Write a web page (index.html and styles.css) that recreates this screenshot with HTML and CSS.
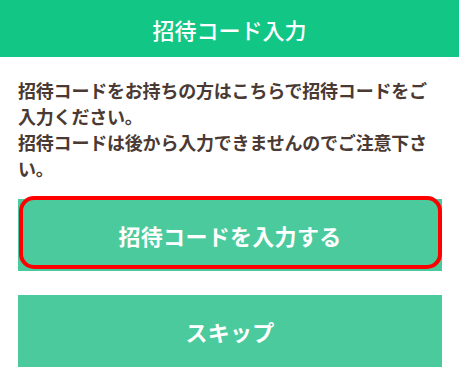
FILE: index.html
```html
<!DOCTYPE html>
<html lang="ja">
<head>
<meta charset="utf-8">
<link rel="stylesheet" href="styles.css">
</head>
<body>
<header class="top-bar">
  <h1 class="top-title">招待コード入力</h1>
</header>
<main class="content">
  <p class="notice">招待コードをお持ちの方はこちらで招待コードをご入力ください。<br>招待コードは後から入力できませんのでご注意下さい。</p>
  <div class="actions">
    <div class="btn-wrap">
      <button class="btn">招待コードを入力する</button>
      <span class="highlight"></span>
    </div>
    <button class="btn">スキップ</button>
  </div>
</main>
</body>
</html>
```

FILE: styles.css
```css
* { box-sizing: border-box; }
html, body {
  margin: 0;
  padding: 0;
  background: #ffffff;
  font-family: "Noto Sans CJK JP", "Noto Sans", sans-serif;
}
.top-bar {
  height: 57px;
  background: #12c786;
  display: flex;
  align-items: center;
  justify-content: center;
}
.top-title {
  margin: 0;
  color: #ffffff;
  font-size: 22px;
  font-weight: 500;
  line-height: 1;
  padding-top: 1px;
}
.content {
  padding: 20px 17px 0 18px;
}
.notice {
  margin: 0;
  color: #4a3a33;
  font-size: 18px;
  font-weight: 700;
  line-height: 26px;
  letter-spacing: -0.2px;
}
.actions {
  margin-top: 18px;
  display: flex;
  flex-direction: column;
  gap: 24px;
}
.btn-wrap {
  position: relative;
}
.btn {
  display: flex;
  align-items: center;
  justify-content: center;
  width: 100%;
  height: 72px;
  border: none;
  margin: 0;
  padding: 0;
  background: #4bcb9d;
  color: #ffffff;
  font-family: "Noto Sans CJK JP", "Noto Sans", sans-serif;
  font-size: 22px;
  font-weight: 700;
  letter-spacing: 0.3px;
}
.highlight {
  position: absolute;
  left: 1px;
  right: 0;
  top: -3px;
  bottom: 2px;
  border: 4px solid #ff0000;
  border-radius: 15px;
  pointer-events: none;
}
```
